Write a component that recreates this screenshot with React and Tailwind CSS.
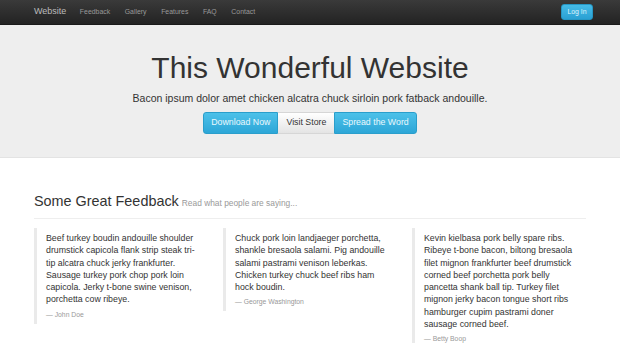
export default function App() {
  const quotes = [
    {
      text: "Beef turkey boudin andouille shoulder drumstick capicola flank strip steak tri-tip alcatra chuck jerky frankfurter. Sausage turkey pork chop pork loin capicola. Jerky t-bone swine venison, porchetta cow ribeye.",
      who: "John Doe",
    },
    {
      text: "Chuck pork loin landjaeger porchetta, shankle bresaola salami. Pig andouille salami pastrami venison leberkas. Chicken turkey chuck beef ribs ham hock boudin.",
      who: "George Washington",
    },
    {
      text: "Kevin kielbasa pork belly spare ribs. Ribeye t-bone bacon, biltong bresaola filet mignon frankfurter beef drumstick corned beef porchetta pork belly pancetta shank ball tip. Turkey filet mignon jerky bacon tongue short ribs hamburger cupim pastrami doner sausage corned beef.",
      who: "Betty Boop",
    },
  ]

  return (
    <div className="min-h-[343px] bg-white font-['Liberation_Sans',Arial,sans-serif] text-[#333]">
      {/* navbar */}
      <nav className="h-[25px] bg-linear-to-b from-[#3a3a3a] to-[#232323] border-b border-[#1a1a1a]">
        <div className="flex items-center h-full pl-[34px] pr-[27px]">
          <a className="text-[9px] text-[#bbb] mr-[13.5px]">Website</a>
          <ul className="flex gap-[14.6px] text-[6.9px] text-[#999]">
            <li>Feedback</li>
            <li>Gallery</li>
            <li>Features</li>
            <li>FAQ</li>
            <li>Contact</li>
          </ul>
          <button className="ml-auto h-[16px] w-[32px] rounded-[3px] border border-[#2596c4] bg-linear-to-b from-[#45bbe7] to-[#2aa0d3] text-[6.9px] text-[#dff3fb]">
            Log In
          </button>
        </div>
      </nav>

      {/* hero */}
      <section className="bg-[#eee] border-b border-[#e3e3e3] pt-[25px] pb-[23px] text-center">
        <h1 className="text-[30px] leading-[36px] font-normal text-[#333]">This Wonderful Website</h1>
        <p className="mt-[4.5px] text-[10.5px] leading-[14px] text-[#333]">
          Bacon ipsum dolor amet chicken alcatra chuck sirloin pork fatback andouille.
        </p>
        <div className="mt-[7.5px] inline-flex h-[22px] text-[8.8px]">
          <button className="px-[7px] rounded-l-[3px] border border-[#2a9ecb] bg-linear-to-b from-[#4cc1e9] to-[#2ca6d7] text-[#eaf8fd]">
            Download Now
          </button>
          <button className="px-[8px] border-y border-[#d6d6d6] bg-linear-to-b from-white to-[#e4e4e4] text-[#333]">
            Visit Store
          </button>
          <button className="px-[7px] rounded-r-[3px] border border-[#2a9ecb] bg-linear-to-b from-[#4cc1e9] to-[#2ca6d7] text-[#eaf8fd]">
            Spread the Word
          </button>
        </div>
      </section>

      {/* feedback */}
      <section className="mx-auto w-[552px] pt-[34px]">
        <div className="flex items-baseline">
          <h2 className="text-[14.4px] leading-[18px] font-normal text-[#333]">Some Great Feedback</h2>
          <small className="ml-[3px] text-[8.4px] text-[#999]">Read what people are saying...</small>
        </div>
        <hr className="mt-[8px] mb-[9px] border-t border-[#eee]" />
        <div className="grid w-[557px] grid-cols-[179px_179px_179px] gap-x-[10px] items-start">
          {quotes.map((q) => (
            <blockquote key={q.who} className="border-l-[3px] border-[#eaeaea] pl-[9px] pr-[15px] pt-[4px] pb-[3px]">
              <p className="text-[8.8px] leading-[12.3px] text-[#333]">{q.text}</p>
              <small className="block mt-[3px] text-[6.8px] leading-[12px] text-[#999]">— {q.who}</small>
            </blockquote>
          ))}
        </div>
      </section>
    </div>
  )
}
